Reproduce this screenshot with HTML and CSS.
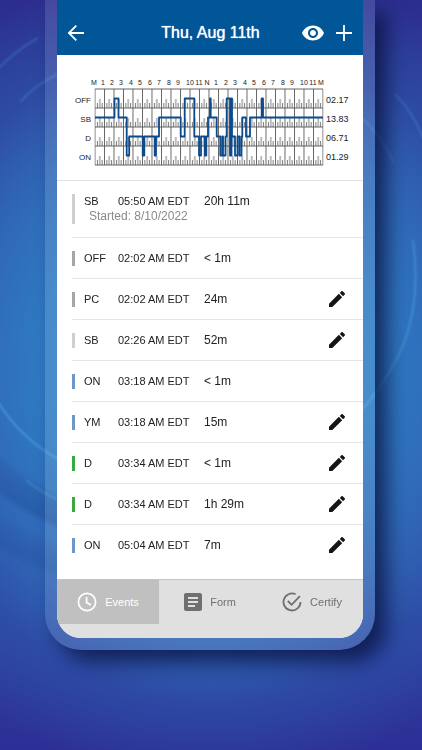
FILE: index.html
```html
<!DOCTYPE html>
<html lang="en">
<head>
<meta charset="utf-8">
<meta name="viewport" content="width=device-width, initial-scale=1">
<title>Driver log</title>
<link rel="stylesheet" href="styles.css">
</head>
<body>
<svg class="backdrop" viewBox="0 0 422 750" preserveAspectRatio="none" aria-hidden="true">
  <defs>
    <linearGradient id="band" x1="0.35" y1="0.9" x2="0.65" y2="0">
      <stop offset="0" stop-color="#1c4690" stop-opacity=".5"/>
      <stop offset="1" stop-color="#1c4690" stop-opacity="0"/>
    </linearGradient>
    <filter id="soft" x="-20%" y="-20%" width="140%" height="140%"><feGaussianBlur stdDeviation="1"/></filter>
    <filter id="softer" x="-20%" y="-20%" width="140%" height="140%"><feGaussianBlur stdDeviation="2"/></filter>
  </defs>
  <path d="M-10 450Q28 485 70 502V532Q28 516 -10 485Z" fill="url(#band)" filter="url(#softer)"/>
  <path d="M-10 510Q28 540 70 552V577Q28 566 -10 542Z" fill="url(#band)" opacity=".6" filter="url(#softer)"/>
  <g fill="none" stroke="#58b8ea" stroke-width="2" filter="url(#soft)">
    <path d="M-2 402Q22 440 60 460" opacity=".5"/>
    <path d="M26 480Q40 492 60 501" opacity=".3"/>
    <path d="M-2 69Q16 50 38 38" opacity=".25"/>
    <path d="M20 102Q36 84 60 73" opacity=".25"/>
    <path d="M395 94Q413 112 423 138" opacity=".25"/>
    <path d="M362 118Q380 134 394 163" opacity=".25"/>
    <path d="M413 240Q424 320 388 374Q376 394 360 412" opacity=".4"/>
  </g>
</svg>
<main class="phone">
  <div class="screen">
    <header class="bar">
      <button class="icon-btn" type="button" aria-label="Back">
        <svg width="18" height="18" viewBox="0 0 18 18"><path d="M17 9H2M9.3 1.6 1.9 9l7.4 7.4" fill="none" stroke="#fff" stroke-width="1.8"/></svg>
      </button>
      <h1>Thu, Aug 11th</h1>
      <button class="icon-btn" type="button" aria-label="View">
        <svg width="22" height="16" viewBox="1 4.5 22 15"><path d="M12 4.5C7 4.5 2.73 7.61 1 12c1.73 4.39 6 7.5 11 7.5s9.27-3.11 11-7.5c-1.73-4.39-6-7.5-11-7.5zM12 17c-2.76 0-5-2.24-5-5s2.24-5 5-5 5 2.24 5 5-2.24 5-5 5zm0-8c-1.66 0-3 1.34-3 3s1.34 3 3 3 3-1.34 3-3-1.34-3-3-3z"/></svg>
      </button>
      <button class="icon-btn" type="button" aria-label="Add">
        <svg width="16" height="16" viewBox="0 0 16 16"><path d="M8 0v16M0 8h16" fill="none" stroke="#fff" stroke-width="1.8"/></svg>
      </button>
    </header>

    <svg class="chart" viewBox="0 0 306 125" role="img" aria-label="Duty status by hour">
      <defs>
        <pattern id="cell" x="38" y="34" width="9.5" height="19" patternUnits="userSpaceOnUse">
          <path d="M2.4 19V14M7.1 19V14M4.75 19V10" stroke="#555" stroke-width=".8" fill="none"/>
        </pattern>
        <pattern id="hours" x="37.5" y="34" width="9.5" height="19" patternUnits="userSpaceOnUse">
          <path d="M.5 0V19" stroke="#555" stroke-width=".9"/>
        </pattern>
      </defs>
      <rect x="38" y="34" width="228" height="76" fill="url(#cell)"/>
      <rect x="37.5" y="34" width="229" height="76" fill="url(#hours)"/>
      <path d="M38 34H266M38 53H266M38 72H266M38 91H266M38 110H266" stroke="#555" stroke-width=".9"/>
      <path class="trace" d="M38 62.5H57.5V43.5H61.5V62.5H69.7V100.5H72.2V81.5H85.7V100.5H87.3V81.5H97.7V100.5H99V81.5H102V62.5H123.7V81.5H127.7V43.5H137.3V81.5H142V100.5H144V81.5H147.7V100.5H149.3V81.5H151V62.5H153V43.5H153.7V62.5H159.7V81.5H163.3V100.5H165.3V81.5H166V100.5H168.5V81.5H169.7V43.5H173V100.5H174.5V43.5H175V81.5H178V100.5H180.5V81.5H182.5V100.5H184.5V81.5H185.3V62.5H189V81.5H193V62.5H204.7V43.5H206V62.5H266"/>
      <g class="hours">
        <text x="37" y="30">M</text><text x="46" y="30">1</text><text x="55" y="30">2</text><text x="64" y="30">3</text><text x="74" y="30">4</text><text x="83" y="30">5</text><text x="93" y="30">6</text><text x="102" y="30">7</text><text x="112" y="30">8</text><text x="121" y="30">9</text><text x="133" y="30">10</text><text x="142" y="30">11</text><text x="150" y="30">N</text><text x="159" y="30">1</text><text x="169" y="30">2</text><text x="178" y="30">3</text><text x="188" y="30">4</text><text x="197" y="30">5</text><text x="207" y="30">6</text><text x="216" y="30">7</text><text x="226" y="30">8</text><text x="235" y="30">9</text><text x="247" y="30">10</text><text x="256" y="30">11</text><text x="264" y="30">M</text>
      </g>
      <g class="rows">
        <text x="34" y="48">OFF</text><text x="34" y="67">SB</text><text x="34" y="86">D</text><text x="34" y="105">ON</text>
      </g>
      <g class="totals">
        <text x="269" y="48">02.17</text><text x="269" y="67">13.83</text><text x="269" y="86">06.71</text><text x="269" y="105">01.29</text>
      </g>
    </svg>

    <svg class="sprite" aria-hidden="true"><symbol id="pencil" viewBox="3 3 18 18"><path d="M3 17.25V21h3.75L17.81 9.94l-3.75-3.75L3 17.25zM20.71 7.04c.39-.39.39-1.02 0-1.41l-2.34-2.34c-.39-.39-1.02-.39-1.41 0l-1.83 1.83 3.75 3.75 1.83-1.83z"/></symbol></svg>

    <ul class="events">
      <li class="event tall light"><span>SB</span><span>05:50 AM EDT</span><span class="duration">20h 11m</span><small>Started: 8/10/2022</small></li>
      <li class="event gray"><span>OFF</span><span>02:02 AM EDT</span><span class="duration">&lt; 1m</span></li>
      <li class="event gray"><span>PC</span><span>02:02 AM EDT</span><span class="duration">24m</span><button class="icon-btn" type="button" aria-label="Edit"><svg width="16" height="16"><use href="#pencil"/></svg></button></li>
      <li class="event light"><span>SB</span><span>02:26 AM EDT</span><span class="duration">52m</span><button class="icon-btn" type="button" aria-label="Edit"><svg width="16" height="16"><use href="#pencil"/></svg></button></li>
      <li class="event blue"><span>ON</span><span>03:18 AM EDT</span><span class="duration">&lt; 1m</span></li>
      <li class="event blue"><span>YM</span><span>03:18 AM EDT</span><span class="duration">15m</span><button class="icon-btn" type="button" aria-label="Edit"><svg width="16" height="16"><use href="#pencil"/></svg></button></li>
      <li class="event green"><span>D</span><span>03:34 AM EDT</span><span class="duration">&lt; 1m</span><button class="icon-btn" type="button" aria-label="Edit"><svg width="16" height="16"><use href="#pencil"/></svg></button></li>
      <li class="event green"><span>D</span><span>03:34 AM EDT</span><span class="duration">1h 29m</span><button class="icon-btn" type="button" aria-label="Edit"><svg width="16" height="16"><use href="#pencil"/></svg></button></li>
      <li class="event blue"><span>ON</span><span>05:04 AM EDT</span><span class="duration">7m</span><button class="icon-btn" type="button" aria-label="Edit"><svg width="16" height="16"><use href="#pencil"/></svg></button></li>
    </ul>

    <nav class="tabs">
      <button class="tab active" type="button">
        <svg width="20" height="20" viewBox="0 0 20 20" fill="none" stroke="#fff" stroke-width="1.7"><circle cx="10" cy="10" r="8.6"/><path d="M9.6 5v5.5l4.3 2.6"/></svg>
        Events
      </button>
      <button class="tab" type="button">
        <svg width="18" height="18" viewBox="3 3 18 18" fill="#6f6f6f"><path d="M19 3H5c-1.1 0-2 .9-2 2v14c0 1.1.9 2 2 2h14c1.1 0 2-.9 2-2V5c0-1.1-.9-2-2-2zm-5 14H7v-2h7v2zm3-4H7v-2h10v2zm0-4H7V7h10v2z"/></svg>
        Form
      </button>
      <button class="tab" type="button">
        <svg width="20" height="20" viewBox="0 0 20 20" fill="none" stroke="#6f6f6f" stroke-width="1.8"><path d="M13.6 2.3A8.5 8.5 0 1 0 18.500 10"/><path d="M5.8 9 9.6 12.8 17.9 4.2"/></svg>
        Certify
      </button>
    </nav>
  </div>
</main>
</body>
</html>
```
FILE: styles.css
```css
* {
  box-sizing: border-box;
}

body {
  margin: 0;
  min-height: 100vh;
  position: relative;
  overflow-x: hidden;
  font-family: "Liberation Sans", Arial, sans-serif;
  font-size: 11px;
  color: #222;
  background:
    radial-gradient(ellipse 90% 56% at 50% 49%, #2a8ace 0%, #2f7fc6 40%, #3069b8 62%, rgba(46, 84, 170, 0.6) 80%, rgba(45, 48, 148, 0) 100%),
    linear-gradient(#2c2d8e, #2e50a8 30%, #2e50a8 72%, #2d2f96);
}

.backdrop {
  position: absolute;
  inset: 0;
  width: 100%;
  height: 100%;
}

.phone {
  position: relative;
  margin: 0 47px 0 45px;
  padding: 0 12px 12px;
  border-radius: 0 0 36px 36px;
  background: rgba(255, 255, 255, 0.12);
  box-shadow: 12px 12px 20px rgba(8, 14, 60, 0.75);
}

.screen {
  overflow: hidden;
  border-radius: 0 0 24px 24px;
  background: #fff;
}

.icon-btn {
  display: flex;
  padding: 0;
  border: 0;
  background: none;
  color: #151515;
}

.icon-btn svg {
  fill: currentColor;
}

.bar .icon-btn {
  color: #fff;
}

.bar {
  display: grid;
  grid-template-columns: 52px 1fr 22px 16px;
  align-items: center;
  column-gap: 12px;
  padding: 22px 11px 11px 10px;
  background: #005696;
}

h1 {
  margin: 0;
  font-size: 16px;
  font-weight: 400;
  line-height: 22px;
  text-align: center;
  color: #fff;
  text-shadow: 0 0 1px #fff;
}

.chart {
  display: block;
  width: 100%;
  fill: #222;
}

.trace {
  fill: none;
  stroke: #0c4a8c;
  stroke-width: 1.8;
  stroke-linejoin: round;
}

.hours {
  font-size: 7px;
  text-anchor: middle;
}

.rows {
  font-size: 8px;
  text-anchor: end;
}

.totals {
  font-size: 9px;
}

.sprite {
  display: none;
}

.events {
  margin: 0;
  padding: 0 0 13px 15px;
  list-style: none;
  position: relative;
  border-top: 1px solid #e2e2e2;
}

.event {
  display: grid;
  grid-template-columns: 12px 34px 86px 1fr 16px;
  align-items: center;
  height: 41px;
  padding-right: 18px;
  border-bottom: 1px solid #e6e6e6;
  line-height: 15px;
}

.event:last-child {
  border-bottom-color: transparent;
}

.event::before {
  content: "";
  width: 3px;
  height: 15px;
  background: currentColor;
}

.event span {
  color: #222;
}

.event .duration {
  font-size: 12px;
}

.event.tall {
  height: 57px;
  align-content: start;
  padding-top: 13px;
}

.event.tall::before {
  height: 30px;
  grid-row: 1 / 3;
}

.event small {
  grid-column: 2 / 5;
  padding-left: 5px;
  font-size: 12px;
  color: #8a8a8a;
}

.light { color: #cfcfcf; }
.gray { color: #a6a6a6; }
.blue { color: #6e97c6; }
.green { color: #3aaa3f; }

.tabs {
  display: grid;
  grid-template-columns: repeat(3, 1fr);
  padding-bottom: 14px;
  border-top: 1px solid #c4c4c4;
  background: #e0e0e0;
}

.tab {
  display: flex;
  align-items: center;
  justify-content: center;
  gap: 8px;
  height: 44px;
  padding: 0;
  border: 0;
  background: none;
  font: inherit;
  color: #707070;
}

.tab.active {
  background: #c0c0c0;
  color: #fff;
}
```
